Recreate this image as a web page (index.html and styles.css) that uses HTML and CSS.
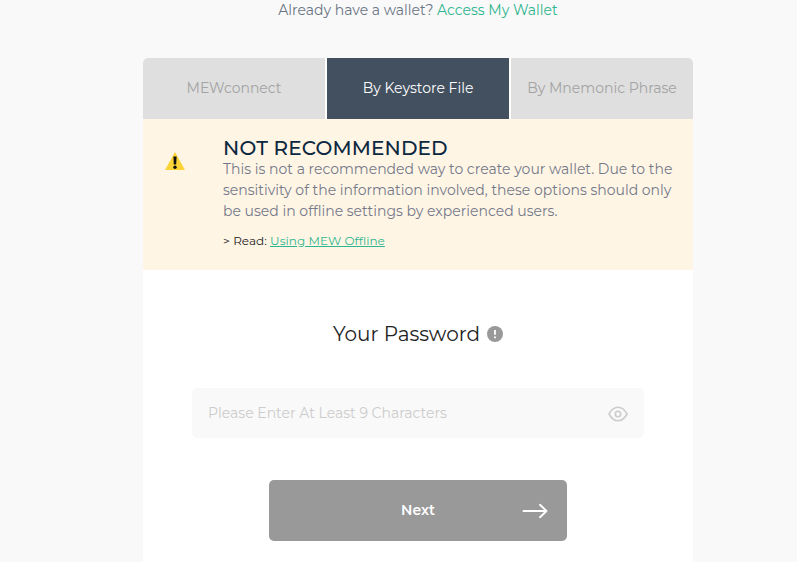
FILE: index.html
```html
<!DOCTYPE html>
<html lang="en">
<head>
  <meta charset="UTF-8">
  <meta name="viewport" content="width=device-width, initial-scale=1.0">
  <title>Create New Wallet</title>
  <link rel="stylesheet" href="styles.css">
</head>
<body>
  <main class="wallet">
    <p class="access">Already have a wallet? <a href="#">Access My Wallet</a></p>

    <nav class="tabs">
      <a class="tab" href="#">MEWconnect</a>
      <a class="tab active" href="#">By Keystore File</a>
      <a class="tab" href="#">By Mnemonic Phrase</a>
    </nav>

    <section class="warning">
      <svg class="warning-icon" width="22" height="20" viewBox="0 0 22 20">
        <path d="M11 1 L21 19 H1 Z" fill="#fdd437"/>
        <path d="M9.4 5.5 h3.2 l-.4 8 h-2.4 z" fill="#111"/>
        <circle cx="11" cy="16.2" r="1.7" fill="#111"/>
      </svg>
      <div class="warning-text">
        <h2>NOT RECOMMENDED</h2>
        <p>This is not a recommended way to create your wallet. Due to the sensitivity of the information involved, these options should only be used in offline settings by experienced users.</p>
        <div class="read">&gt; Read: <a href="#">Using MEW Offline</a></div>
      </div>
    </section>

    <form class="password">
      <div class="password-title">
        <h3>Your Password</h3>
        <svg width="16" height="16" viewBox="0 0 16 16">
          <circle cx="8" cy="8" r="8" fill="#999"/>
          <path d="M8 4 V8.8 M8 10.4 V12.2" stroke="#fff" stroke-width="1.8"/>
        </svg>
      </div>
      <div class="field">
        <input type="text" placeholder="Please Enter At Least 9 Characters">
        <svg width="20" height="16" viewBox="0 0 20 16" fill="none" stroke="#ccc" stroke-width="1.6">
          <path d="M1 8 C3.5 3.5 6.5 1.3 10 1.3 S16.5 3.5 19 8 C16.5 12.5 13.5 14.7 10 14.7 S3.5 12.5 1 8 Z"/>
          <circle cx="10" cy="8" r="2.7"/>
        </svg>
      </div>
      <button class="next" type="button">
        <span>Next</span>
        <svg width="26" height="16" viewBox="0 0 26 16" fill="none" stroke="#fff" stroke-width="1.9" stroke-linecap="round" stroke-linejoin="round">
          <path d="M1.5 8 H24.5 M18 1.8 L24.5 8 L18 14.2"/>
        </svg>
      </button>
    </form>
  </main>
</body>
</html>
```
FILE: styles.css
```css
* {
  box-sizing: border-box;
}

body {
  margin: 0;
  background-color: #f9f9f9;
  color: #222;
  font-family: 'Montserrat', 'Inter', sans-serif;
  overflow: hidden;
}

h2, h3, p {
  margin: 0;
}

a {
  color: #2fb58f;
  text-decoration: none;
}

.wallet {
  width: 550px;
  height: 562px;
  margin-left: 143px;
  display: flex;
  flex-direction: column;
}

.access {
  height: 58px;
  line-height: 20px;
  text-align: center;
  font-size: 14px;
  color: #6a7585;
}

/* Tabs */
.tabs {
  display: grid;
  grid-template-columns: repeat(3, 1fr);
  gap: 2px;
  height: 61px;
  background-color: #fff;
  border-radius: 5px 5px 0 0;
  overflow: hidden;
}

.tab {
  display: flex;
  align-items: center;
  justify-content: center;
  padding-bottom: 1px;
  background-color: #dfdfdf;
  color: #a3a3a3;
  font-size: 14px;
}

.tab.active {
  background-color: #435060;
  color: #fff;
}

/* Warning */
.warning {
  display: flex;
  height: 151px;
  padding: 18px 0 0 21px;
  background-color: #fff5e5;
}

.warning-icon {
  flex-shrink: 0;
  margin-top: 14px;
}

.warning-text {
  width: 460px;
  margin-left: 37px;
}

.warning h2 {
  line-height: 22px;
  font-size: 20px;
  font-weight: 500;
  letter-spacing: 0.15px;
  color: #0b2840;
}

.warning p {
  line-height: 21px;
  font-size: 14px;
  color: #74798a;
}

.read {
  margin-top: 10px;
  line-height: 18px;
  font-size: 12px;
  letter-spacing: 0.05px;
}

.read a {
  text-decoration: underline;
}

/* Password form */
.password {
  flex: 1;
  display: flex;
  flex-direction: column;
  align-items: center;
  padding-top: 50px;
  background-color: #fff;
}

.password-title {
  display: flex;
  align-items: center;
  gap: 7px;
  height: 28px;
}

.password-title h3 {
  font-size: 20px;
  font-weight: 400;
}

.field {
  display: flex;
  align-items: center;
  width: 452px;
  height: 50px;
  margin-top: 40px;
  padding: 0 16px;
  background-color: #f9f9f9;
  border-radius: 5px;
}

.field input {
  flex: 1;
  padding: 0 0 1px;
  border: none;
  outline: none;
  background: none;
  font-family: inherit;
  font-size: 14px;
}

.field input::placeholder {
  color: #ccc;
}

.field svg {
  margin-top: 2px;
}

.next {
  display: grid;
  grid-template-columns: 1fr auto 1fr;
  align-items: center;
  width: 298px;
  height: 61px;
  margin-top: 42px;
  padding: 0 19px;
  border: none;
  border-radius: 5px;
  background-color: #999;
  color: #fff;
  font-family: inherit;
  font-size: 14px;
  font-weight: 600;
}

.next span {
  grid-column: 2;
  padding-bottom: 2px;
}

.next svg {
  justify-self: end;
}
```
